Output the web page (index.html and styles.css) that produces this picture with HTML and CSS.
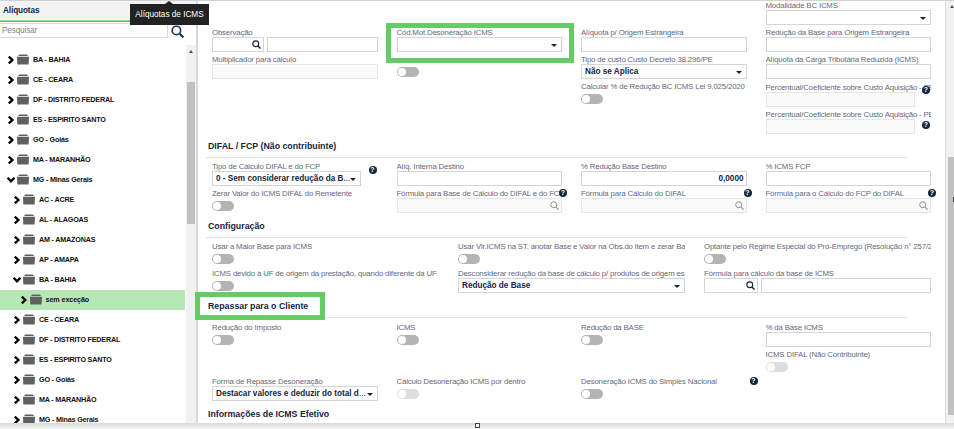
FILE: index.html
```html
<!DOCTYPE html>
<html lang="pt-BR">
<head>
<meta charset="utf-8">
<title>Alíquotas de ICMS</title>
<link rel="stylesheet" href="styles.css">
</head>
<body>
<svg width="0" height="0" class="defs">
  <symbol id="chev" viewBox="0 0 8 8"><path d="M1.8 .6 5.4 4 1.8 7.4" fill="none" stroke="#000" stroke-width="2.3"/></symbol>
  <symbol id="folder" viewBox="0 0 12 11"><path d="M1.6 1.2 2.4.4H10l1 1.6H1zM0 2.7h12L11.6 10.6H.3z" fill="#606060"/></symbol>
  <symbol id="lens" viewBox="0 0 12 12"><circle cx="5" cy="5" r="3.9" fill="none" stroke="currentColor" stroke-width="1.5"/><path d="M8 8l3.4 3.4" stroke="currentColor" stroke-width="2"/></symbol>
  <symbol id="lens-thin" viewBox="0 0 12 12"><circle cx="5" cy="5" r="4" fill="none" stroke="currentColor" stroke-width="1.2"/><path d="M8 8l3.4 3.4" stroke="currentColor" stroke-width="1.4"/></symbol>
</svg>
<div class="app">
  <aside class="side">
    <div class="side-head">Alíquotas</div>
    <div class="search"><div class="search-box">Pesquisar</div><svg class="search-icon"><use href="#lens"/></svg></div>
    <div class="tree-wrap">
      <ul class="tree">
        <li><svg class="chev"><use href="#chev"/></svg><svg class="folder"><use href="#folder"/></svg><span>BA - BAHIA</span></li>
        <li><svg class="chev"><use href="#chev"/></svg><svg class="folder"><use href="#folder"/></svg><span>CE - CEARA</span></li>
        <li><svg class="chev"><use href="#chev"/></svg><svg class="folder"><use href="#folder"/></svg><span>DF - DISTRITO FEDERAL</span></li>
        <li><svg class="chev"><use href="#chev"/></svg><svg class="folder"><use href="#folder"/></svg><span>ES - ESPIRITO SANTO</span></li>
        <li><svg class="chev"><use href="#chev"/></svg><svg class="folder"><use href="#folder"/></svg><span>GO - Goiás</span></li>
        <li><svg class="chev"><use href="#chev"/></svg><svg class="folder"><use href="#folder"/></svg><span>MA - MARANHÃO</span></li>
        <li><svg class="chev open"><use href="#chev"/></svg><svg class="folder"><use href="#folder"/></svg><span>MG - Minas Gerais</span></li>
        <li class="l2"><svg class="chev"><use href="#chev"/></svg><svg class="folder"><use href="#folder"/></svg><span>AC - ACRE</span></li>
        <li class="l2"><svg class="chev"><use href="#chev"/></svg><svg class="folder"><use href="#folder"/></svg><span>AL - ALAGOAS</span></li>
        <li class="l2"><svg class="chev"><use href="#chev"/></svg><svg class="folder"><use href="#folder"/></svg><span>AM - AMAZONAS</span></li>
        <li class="l2"><svg class="chev"><use href="#chev"/></svg><svg class="folder"><use href="#folder"/></svg><span>AP - AMAPA</span></li>
        <li class="l2"><svg class="chev open"><use href="#chev"/></svg><svg class="folder"><use href="#folder"/></svg><span>BA - BAHIA</span></li>
        <li class="l3 selected"><svg class="chev"><use href="#chev"/></svg><svg class="folder"><use href="#folder"/></svg><span>sem exceção</span></li>
        <li class="l2"><svg class="chev"><use href="#chev"/></svg><svg class="folder"><use href="#folder"/></svg><span>CE - CEARA</span></li>
        <li class="l2"><svg class="chev"><use href="#chev"/></svg><svg class="folder"><use href="#folder"/></svg><span>DF - DISTRITO FEDERAL</span></li>
        <li class="l2"><svg class="chev"><use href="#chev"/></svg><svg class="folder"><use href="#folder"/></svg><span>ES - ESPIRITO SANTO</span></li>
        <li class="l2"><svg class="chev"><use href="#chev"/></svg><svg class="folder"><use href="#folder"/></svg><span>GO - Goiás</span></li>
        <li class="l2"><svg class="chev"><use href="#chev"/></svg><svg class="folder"><use href="#folder"/></svg><span>MA - MARANHÃO</span></li>
        <li class="l2"><svg class="chev"><use href="#chev"/></svg><svg class="folder"><use href="#folder"/></svg><span>MG - Minas Gerais</span></li>
      </ul>
      <div class="bar side-bar"><i class="up"></i><div class="thumb"></div></div>
    </div>
  </aside>
  <main class="main">
    <div class="form">
      <section class="grid four first">
        <div class="field c4"><label>Modalidade BC ICMS</label><div class="input select"></div></div>
        <div class="field c1"><label>Observação</label><div class="pair"><div class="input code"><svg class="lens"><use href="#lens"/></svg></div><div class="input"></div></div></div>
        <div class="field marked"><label>Cód.Mot.Desoneração ICMS</label><div class="input select"></div></div>
        <div class="field"><label>Alíquota p/ Origem Estrangeira</label><div class="input"></div></div>
        <div class="field"><label>Redução da Base para Origem Estrangeira</label><div class="input"></div></div>
        <div class="field"><label>Multiplicador para cálculo</label><div class="input off"></div></div>
        <div class="field"><label></label><div class="toggle"></div></div>
        <div class="field"><label>Tipo de custo Custo Decreto 38.296/PE</label><div class="input select"><span>Não se Aplica</span></div></div>
        <div class="field"><label>Alíquota da Carga Tributária Reduzida (ICMS)</label><div class="input"></div></div>
        <div class="field c3"><label>Calcular % de Redução BC ICMS Lei 9.025/2020</label><div class="toggle"></div></div>
        <div class="field short low"><label>Percentual/Coeficiente sobre Custo Aquisição - PE</label><div class="input off"></div><b class="help h-mid">?</b></div>
        <div class="field c4 short low"><label>Percentual/Coeficiente sobre Custo Aquisição - PE</label><div class="input off"></div><b class="help h-low">?</b></div>
      </section>
      <h2><span>DIFAL / FCP (Não contribuinte)</span></h2>
      <section class="grid four">
        <div class="field short"><label>Tipo de Cálculo DIFAL e do FCP</label><div class="input select"><span>0 - Sem considerar redução da B<em>...</em></span></div><b class="help h-side">?</b></div>
        <div class="field"><label>Alíq. Interna Destino</label><div class="input"></div></div>
        <div class="field"><label>% Redução Base Destino</label><div class="input num"><span>0,0000</span></div></div>
        <div class="field"><label>% ICMS FCP</label><div class="input"></div></div>
        <div class="field"><label>Zerar Valor do ICMS DIFAL do Remetente</label><div class="toggle"></div></div>
        <div class="field"><label>Fórmula para Base de Cálculo do DIFAL e do FCP</label><div class="input off"><svg class="lens"><use href="#lens-thin"/></svg></div><b class="help">?</b></div>
        <div class="field"><label>Fórmula para Cálculo do DIFAL</label><div class="input off"><svg class="lens"><use href="#lens-thin"/></svg></div><b class="help">?</b></div>
        <div class="field"><label>Fórmula para o Cálculo do FCP do DIFAL</label><div class="input off"><svg class="lens"><use href="#lens-thin"/></svg></div><b class="help">?</b></div>
      </section>
      <h2><span>Configuração</span></h2>
      <section class="grid three">
        <div class="field"><label>Usar a Maior Base para ICMS</label><div class="toggle"></div></div>
        <div class="field"><label>Usar Vlr.ICMS na ST, anotar Base e Valor na Obs.do item e zerar Ba</label><div class="toggle"></div></div>
        <div class="field"><label>Optante pelo Regime Especial do Pró-Emprego (Resolução n° 257/2003)</label><div class="toggle"></div></div>
        <div class="field"><label>ICMS devido à UF de origem da prestação, quando diferente da UF</label><div class="toggle"></div></div>
        <div class="field"><label>Desconsiderar redução da base de cálculo p/ produtos de origem es</label><div class="input select"><span>Redução de Base</span></div></div>
        <div class="field"><label>Fórmula para cálculo da base de ICMS</label><div class="pair"><div class="input code"><svg class="lens"><use href="#lens"/></svg></div><div class="input"></div></div></div>
      </section>
      <h2 class="boxed"><span>Repassar para o Cliente</span></h2>
      <section class="grid four">
        <div class="field"><label>Redução do Imposto</label><div class="toggle"></div></div>
        <div class="field"><label>ICMS</label><div class="toggle"></div></div>
        <div class="field"><label>Redução da BASE</label><div class="toggle"></div></div>
        <div class="field"><label>% da Base ICMS</label><div class="input"></div></div>
        <div class="field c4"><label>ICMS DIFAL (Não Contribuinte)</label><div class="toggle dim"></div></div>
        <div class="field c1"><label>Forma de Repasse Desoneração</label><div class="input select"><span>Destacar valores e deduzir do total d<em>...</em></span></div></div>
        <div class="field"><label>Calculo Desoneração ICMS por dentro</label><div class="toggle dim"></div></div>
        <div class="field"><label>Desoneração ICMS do Simples Nacional</label><div class="toggle"></div><b class="help h-far">?</b></div>
      </section>
      <h2 class="last"><span>Informações de ICMS Efetivo</span></h2>
    </div>
    <div class="bar main-bar"><i class="up"></i><div class="thumb"></div></div>
  </main>
</div>
<footer class="foot"><i class="handle"></i></footer>
<div class="tip">Alíquotas de ICMS</div>
<i class="edge-mark"></i>
</body>
</html>
```
FILE: styles.css
```css
*, *::before, *::after { box-sizing: border-box; }
body { margin: 0; width: 954px; height: 429px; overflow: hidden; position: relative; background: #fff; font-family: "Liberation Sans", Arial, sans-serif; color: #15253f; }
.defs { position: absolute; }
.app { display: flex; height: 423px; border-top: 1px solid #d2d2d2; overflow: hidden; }

.side { width: 198px; flex: none; border-right: 2px solid #d9d9dc; display: flex; flex-direction: column; background: #fff; }
.side-head { height: 21px; background: #f3f3f4; border-bottom: 1px solid #4cc44c; box-shadow: inset 0 -1px #a5dda5; padding-left: 3px; font: bold 8.2px/19px "Liberation Sans", sans-serif; flex: none; letter-spacing: -.1px; }
.search { display: flex; height: 22px; flex: none; padding-top: 1px; }
.search-box { width: 168px; height: 15px; border: 1px solid #d8d8d8; border-left: 0; padding-left: 2px; font-size: 8.2px; line-height: 13px; color: #858585; letter-spacing: -.15px; }
.search-icon { width: 13px; height: 13px; margin: 2px 0 0 3px; color: #1d3357; }
.tree-wrap { display: flex; flex: 1; min-height: 0; margin-top: 1px; }
.tree { list-style: none; margin: 0; padding: 5px 0 0; width: 186px; overflow: hidden; }
.tree li { display: flex; align-items: center; height: 20px; padding-left: 7px; font: bold 7.2px/20px "Liberation Sans", sans-serif; letter-spacing: -.2px; color: #111; white-space: nowrap; width: 185px; }
.tree .l2 { padding-left: 13px; }
.tree .l3 { padding-left: 19.5px; letter-spacing: -.1px; }
.tree .selected { background: #b6e8b6; }
.chev { width: 8px; height: 8px; margin-right: 2px; }
.chev.open { transform: rotate(90deg); }
.folder { width: 12px; height: 11px; margin-right: 4px; margin-top: -1px; }
.bar { background: #f1f1f1; flex: none; display: flex; flex-direction: column; align-items: center; }
.bar .thumb { background: #c1c1c1; }
.up { border: 2px solid transparent; border-top: 0; border-bottom: 3px solid #505050; }
.side-bar { width: 10px; }
.side-bar .up { margin-top: 5px; }
.side-bar .thumb { width: 8px; height: 142px; margin-top: 29px; }

.main { flex: 1; display: flex; min-width: 0; }
.form { flex: 1; min-width: 0; margin-top: -1px; }
.main-bar { width: 9px; border-left: 1px solid #dcdcdc; }
.main-bar .up { margin-top: 4px; margin-left: 3px; }
.main-bar .thumb { width: 6px; height: 258px; margin: 149px 0 0 2px; }
.grid { display: grid; column-gap: 19px; grid-auto-rows: 27px; width: 719px; margin-left: 14px; }
.four { grid-template-columns: repeat(4, minmax(0, 1fr)); }
.three { grid-template-columns: repeat(3, minmax(0, 1fr)); }
.c1 { grid-column-start: 1; }
.c3 { grid-column-start: 3; }
.c4 { grid-column-start: 4; }
.field { position: relative; }
.field label { display: block; height: 10px; font-size: 7.8px; letter-spacing: -.15px; line-height: 11px; color: #5f6a7c; white-space: nowrap; overflow: hidden; }
.input { height: 15px; border: 1px solid #d5d5d5; background: #fff; display: flex; align-items: center; padding: 0 3px; font: bold 8.2px/13px "Liberation Sans", sans-serif; flex: 1; }
.input span { white-space: nowrap; flex: 1; }
.input em { font-style: normal; font-weight: normal; }
.input.off { background: #fafafa; border-color: #e6e6e6; }
.short .input { width: 149px; }
.low { top: 1px; }
.select::after { content: ""; border: 3px solid transparent; border-top: 3px solid #15253f; border-bottom: 0; margin: 1px 1px 0 auto; }
.num { text-align: right; padding-right: 2px; }
.pair { display: flex; gap: 3px; }
.code { flex: 0 0 52px; }
.three .code { flex-basis: 54px; }
.lens { width: 9px; height: 9px; margin-left: auto; margin-right: -1px; color: #15253f; }
.off .lens { color: #888; }
.toggle { width: 22px; height: 10px; margin-top: 3px; border-radius: 5px; background: #b4b4b4; display: flex; padding: 1px; }
.toggle::before { content: ""; width: 8px; height: 8px; border-radius: 50%; background: #fff; }
.toggle.dim { background: #dedede; }
.help { position: absolute; right: -5px; top: 1px; width: 8px; height: 8px; border-radius: 50%; background: #15253f; color: #fff; font: bold 7px/8px "Liberation Sans", sans-serif; text-align: center; }
.h-mid { right: 1px; top: 4px; }
.h-low { right: 1px; top: 12px; }
.h-side { right: 1px; top: 5px; }
.h-far { right: -11px; }
h2 { position: relative; height: 23px; margin: 0 0 3px 8px; width: 701px; border-bottom: 1px solid #e2e2e2; padding-left: 2px; font: bold 8.8px/23px "Liberation Sans", sans-serif; }
h2.boxed { margin-bottom: 4px; }
h2.last { border: 0; margin-bottom: 0; }
.boxed::after, .marked::after { content: ""; position: absolute; border: 5px solid #65cb65; }
.boxed::after { left: -11px; top: -3px; width: 130px; height: 28px; }
.marked::after { left: -11px; top: -4px; width: 188px; height: 40px; z-index: 2; }

.foot { height: 6px; background: linear-gradient(#dadada, #f5f5f5); display: flex; justify-content: center; }
.handle { width: 5px; height: 5px; border: 1px solid #444; background: #fff; }
.tip { position: absolute; left: 130px; top: 4px; width: 79px; height: 21px; background: #222; color: #fff; font-size: 8.2px; line-height: 21px; text-align: center; white-space: nowrap; }
.tip::before { content: ""; position: absolute; left: 35px; top: -3px; border: 4px solid transparent; border-top: 0; border-bottom: 3px solid #222; }
.edge-mark { position: absolute; right: 0; top: 197px; width: 1px; height: 5px; background: #444; }
```
